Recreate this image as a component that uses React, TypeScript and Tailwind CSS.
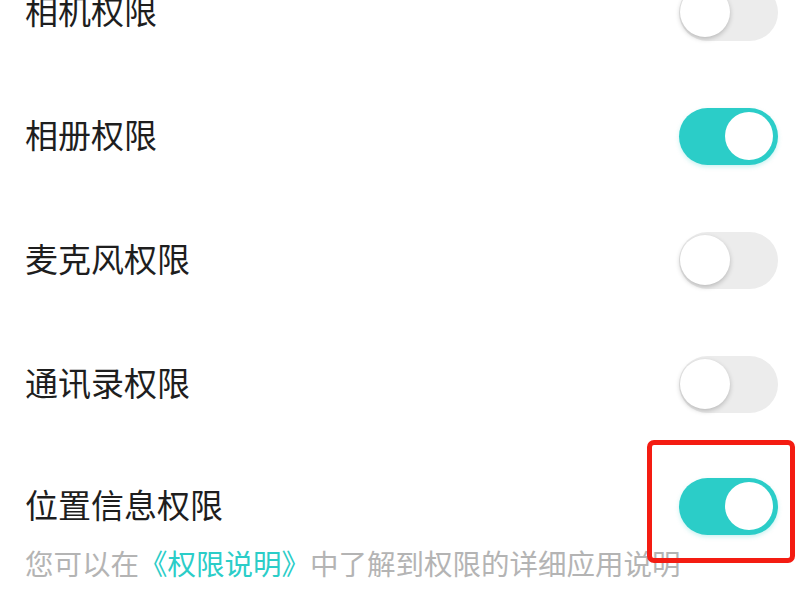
import React from "react";

function Toggle({ on }: { on: boolean }) {
  if (on) {
    return (
      <div className="relative h-[57px] w-[99px] rounded-full bg-[#2bcdc8] shadow-[0_2px_4px_rgba(43,205,200,0.25)]">
        <div className="absolute right-[5px] top-[4.5px] h-[48px] w-[48px] rounded-full bg-white" />
      </div>
    );
  }
  return (
    <div className="relative h-[57px] w-[99px] rounded-full bg-[#ececec]">
      <div className="absolute left-[1px] top-[3px] h-[50px] w-[50px] rounded-full bg-white shadow-[0_2px_5px_rgba(0,0,0,0.22)]" />
    </div>
  );
}

const rows = [
  { label: "相机权限", on: false },
  { label: "相册权限", on: true },
  { label: "麦克风权限", on: false },
  { label: "通讯录权限", on: false },
];

export default function App() {
  return (
    <div
      className="relative h-[600px] w-[800px] overflow-hidden bg-white"
      style={{ fontFamily: '"Noto Sans CJK SC", "Noto Sans", sans-serif' }}
    >
      <div className="mt-[-50px] pl-[25px] pr-[22px]">
        {rows.map((r) => (
          <div key={r.label} className="flex h-[124px] items-center justify-between">
            <span className="-translate-y-[2px] text-[33px] leading-none text-[#1e1e1e]">{r.label}</span>
            <Toggle on={r.on} />
          </div>
        ))}
        <div className="pt-[31px]">
          <div className="flex h-[58px] items-center justify-between">
            <span className="-translate-y-[2px] text-[33px] leading-none text-[#1e1e1e]">位置信息权限</span>
            <div className="relative">
              <Toggle on={true} />
              <div className="absolute left-[-32px] top-[-38px] h-[123px] w-[148px] rounded-[7px] border-[5px] border-[#f41c12]" />
            </div>
          </div>
          <p className="mt-[14px] text-[28.5px] leading-[28px] text-[#b4b4b4]">
            您可以在<span className="text-[#2bcdc8]">《权限说明》</span>中了解到权限的详细应用说明
          </p>
        </div>
      </div>
    </div>
  );
}
